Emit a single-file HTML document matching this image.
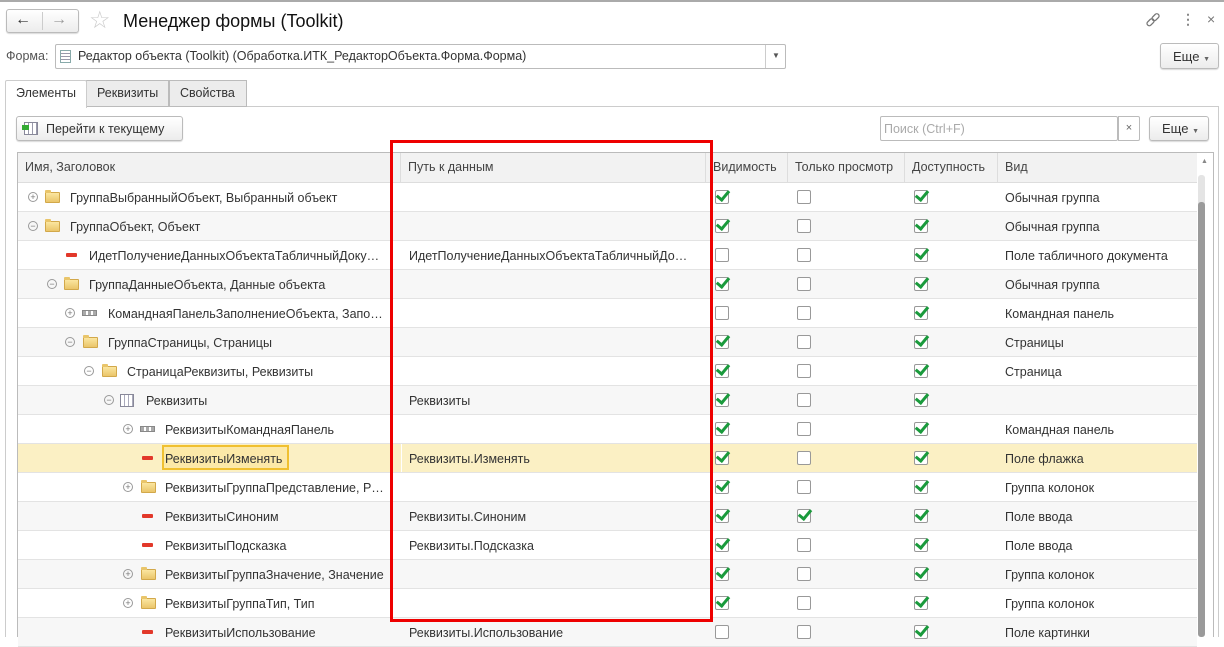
<!DOCTYPE html>
<html><head><meta charset="utf-8">
<style>
*{margin:0;padding:0;box-sizing:border-box}
body{width:1224px;height:637px;overflow:hidden;background:#fff;font-family:"Liberation Sans",sans-serif;font-size:12px;color:#333;position:relative}
.a{position:absolute}
.btn{position:absolute;border:1px solid #bbb;border-radius:3px;background:linear-gradient(#fff,#ececec);box-shadow:0 1px 1px rgba(0,0,0,.15)}
.r{position:absolute;left:18px;width:1179px;height:29px;border-bottom:1px solid #e3e3e3}
.g{background:#f7f7f7}
.sel{background:#fbf0c4}
.t{position:absolute;top:8px;white-space:nowrap;color:#333;font-size:12.5px}
.cb{position:absolute;top:7px;width:14px;height:14px;border:1px solid #999;border-radius:2px;background:#fff}
.cb.c::after{content:"";position:absolute;left:3px;top:-3px;width:5px;height:10px;border:solid #1a9a3c;border-width:0 3px 3px 0;transform:rotate(40deg)}
.ex{position:absolute;top:9px;width:10px;height:10px;border:1px solid #999;border-radius:50%;font-size:9px;line-height:8px;text-align:center;color:#777}
.fo{position:absolute;top:9px;width:15px;height:11px;background:linear-gradient(#fbe6a0,#eac56a);border:1px solid #d2a84a;border-radius:1px}
.fo::before{content:"";position:absolute;left:-1px;top:-3px;width:6px;height:3px;background:#e9c56a;border-radius:1px 1px 0 0}
.rb{position:absolute;top:12px;width:11px;height:4px;background:#e2382a;border-radius:1px}
.cp{position:absolute;top:11px;width:15px;height:6px;border:1px solid #888;background:repeating-linear-gradient(90deg,#aaa 0 3px,#fff 3px 5px)}
.h{position:absolute;top:153px;height:29px;line-height:28px;border-right:1px solid #ddd;padding-left:7px;color:#444;font-size:12.5px;background:#f2f2f2}
</style></head><body>
<div class="a" style="left:0;top:0;width:1224px;height:2px;background:#aaa"></div>
<div class="btn" style="left:6px;top:9px;width:73px;height:24px"></div>
<div class="a" style="left:42px;top:12px;width:1px;height:18px;background:#ccc"></div>
<div class="a" style="left:15px;top:11px;font-size:16px;color:#333">&#8592;</div>
<div class="a" style="left:51px;top:11px;font-size:16px;color:#999">&#8594;</div>
<div class="a" style="left:89px;top:6px;font-size:24px;color:#ccc">&#9734;</div>
<div class="a" style="left:123px;top:11px;font-size:18px;color:#111">Менеджер формы (Toolkit)</div>
<svg class="a" style="left:1145px;top:12px" width="16" height="16" viewBox="0 0 16 16"><g fill="none" stroke="#777" stroke-width="1.3"><rect x="1.5" y="8" width="8" height="4.5" rx="2.2" transform="rotate(-45 5.5 10.2)"/><rect x="6.5" y="3" width="8" height="4.5" rx="2.2" transform="rotate(-45 10.5 5.2)"/></g></svg>
<div class="a" style="left:1181px;top:11px;font-size:14px;color:#888;font-weight:bold">&#8942;</div>
<div class="a" style="left:1207px;top:11px;font-size:14px;color:#777">&#215;</div>
<div class="a" style="left:6px;top:49px;font-size:12.5px;color:#555">Форма:</div>
<div class="a" style="left:55px;top:44px;width:731px;height:25px;border:1px solid #bbb;border-radius:2px"></div>
<div class="a" style="left:60px;top:50px;width:11px;height:13px;border:1px solid #8aa;background:repeating-linear-gradient(#fff 0 2px,#99a 2px 3px)"></div>
<div class="a" style="left:78px;top:49px;font-size:12.5px;color:#333">Редактор объекта (Toolkit) (Обработка.ИТК_РедакторОбъекта.Форма.Форма)</div>
<div class="a" style="left:765px;top:45px;width:1px;height:23px;background:#ccc"></div>
<div class="a" style="left:772px;top:51px;font-size:8px;color:#555">&#9660;</div>
<div class="btn" style="left:1160px;top:43px;width:59px;height:26px"></div>
<div class="a" style="left:1173px;top:49px;font-size:13px;color:#333">Еще <span style="font-size:7px;color:#666">&#9660;</span></div>
<div class="a" style="left:5px;top:106px;width:1214px;height:531px;border:1px solid #ccc;border-bottom:none"></div>
<div class="a" style="left:86px;top:80px;width:83px;height:27px;border:1px solid #bbb;background:#ececec"></div>
<div class="a" style="left:169px;top:80px;width:78px;height:27px;border:1px solid #bbb;background:#ececec"></div>
<div class="a" style="left:5px;top:80px;width:82px;height:28px;border:1px solid #ccc;border-bottom:none;background:#fff;border-radius:2px 2px 0 0"></div>
<div class="a" style="left:16px;top:86px;font-size:12.5px;color:#333">Элементы</div>
<div class="a" style="left:97px;top:86px;font-size:12.5px;color:#333">Реквизиты</div>
<div class="a" style="left:180px;top:86px;font-size:12.5px;color:#333">Свойства</div>
<div class="btn" style="left:16px;top:116px;width:167px;height:25px"></div>
<div class="a" style="left:24px;top:122px;width:14px;height:13px;border:1px solid #889;background:repeating-linear-gradient(90deg,#fff 0 3px,#99a 3px 4px)"></div>
<div class="a" style="left:22px;top:125px;width:7px;height:5px;background:#3a3"></div>
<div class="a" style="left:46px;top:122px;font-size:12.5px;color:#333">Перейти к текущему</div>
<div class="a" style="left:880px;top:116px;width:238px;height:25px;border:1px solid #bbb;border-radius:2px"></div>
<div class="a" style="left:884px;top:122px;font-size:12.5px;color:#aaa">Поиск (Ctrl+F)</div>
<div class="a" style="left:1118px;top:116px;width:22px;height:25px;border:1px solid #bbb;border-radius:0 2px 2px 0;text-align:center;line-height:22px;color:#666;font-size:11px">&#215;</div>
<div class="btn" style="left:1149px;top:116px;width:60px;height:25px"></div>
<div class="a" style="left:1162px;top:121px;font-size:13px;color:#333">Еще <span style="font-size:7px;color:#666">&#9660;</span></div>
<div class="a" style="left:17px;top:152px;width:1197px;height:485px;border:1px solid #bbb;border-bottom:none"></div>
<div class="h" style="left:18px;width:375px">Имя, Заголовок</div>
<div class="h" style="left:393px;width:8px;padding:0"></div>
<div class="h" style="left:401px;width:305px">Путь к данным</div>
<div class="h" style="left:706px;width:82px">Видимость</div>
<div class="h" style="left:788px;width:117px">Только просмотр</div>
<div class="h" style="left:905px;width:93px">Доступность</div>
<div class="h" style="left:998px;width:199px;border-right:none">Вид</div>
<div class="a" style="left:18px;top:182px;width:1179px;height:1px;background:#ddd"></div>
<div class="a" style="left:1197px;top:153px;width:16px;height:484px;background:#fff"></div>
<div class="a" style="left:1201px;top:158px;font-size:7px;color:#888">&#9650;</div>
<div class="a" style="left:1198px;top:175px;width:7px;height:75px;background:#e4e4e4;border-radius:3px"></div>
<div class="a" style="left:1198px;top:202px;width:7px;height:435px;background:#9a9a9a;border-radius:3px"></div>

<div class="r" style="top:183px"><div class="ex" style="left:10px">+</div><div class="fo" style="left:27px"></div><div class="t" style="left:52px">ГруппаВыбранныйОбъект, Выбранный объект</div><div class="cb c" style="left:697px"></div><div class="cb" style="left:779px"></div><div class="cb c" style="left:896px"></div><div class="t" style="left:987px">Обычная группа</div></div>
<div class="r g" style="top:212px"><div class="ex" style="left:10px">−</div><div class="fo" style="left:27px"></div><div class="t" style="left:52px">ГруппаОбъект, Объект</div><div class="cb c" style="left:697px"></div><div class="cb" style="left:779px"></div><div class="cb c" style="left:896px"></div><div class="t" style="left:987px">Обычная группа</div></div>
<div class="r" style="top:241px"><div class="rb" style="left:48px"></div><div class="t" style="left:71px">ИдетПолучениеДанныхОбъектаТабличныйДоку…</div><div class="t" style="left:391px">ИдетПолучениеДанныхОбъектаТабличныйДо…</div><div class="cb" style="left:697px"></div><div class="cb" style="left:779px"></div><div class="cb c" style="left:896px"></div><div class="t" style="left:987px">Поле табличного документа</div></div>
<div class="r g" style="top:270px"><div class="ex" style="left:29px">−</div><div class="fo" style="left:46px"></div><div class="t" style="left:71px">ГруппаДанныеОбъекта, Данные объекта</div><div class="cb c" style="left:697px"></div><div class="cb" style="left:779px"></div><div class="cb c" style="left:896px"></div><div class="t" style="left:987px">Обычная группа</div></div>
<div class="r" style="top:299px"><div class="ex" style="left:47px">+</div><div class="cp" style="left:64px"></div><div class="t" style="left:90px">КоманднаяПанельЗаполнениеОбъекта, Запо…</div><div class="cb" style="left:697px"></div><div class="cb" style="left:779px"></div><div class="cb c" style="left:896px"></div><div class="t" style="left:987px">Командная панель</div></div>
<div class="r g" style="top:328px"><div class="ex" style="left:47px">−</div><div class="fo" style="left:65px"></div><div class="t" style="left:90px">ГруппаСтраницы, Страницы</div><div class="cb c" style="left:697px"></div><div class="cb" style="left:779px"></div><div class="cb c" style="left:896px"></div><div class="t" style="left:987px">Страницы</div></div>
<div class="r" style="top:357px"><div class="ex" style="left:66px">−</div><div class="fo" style="left:84px"></div><div class="t" style="left:109px">СтраницаРеквизиты, Реквизиты</div><div class="cb c" style="left:697px"></div><div class="cb" style="left:779px"></div><div class="cb c" style="left:896px"></div><div class="t" style="left:987px">Страница</div></div>
<div class="r g" style="top:386px"><div class="ex" style="left:86px">−</div><div class="a" style="left:102px;top:8px;width:14px;height:13px;border:1px solid #889;background:repeating-linear-gradient(90deg,#fff 0 3px,#aab 3px 4px)"></div><div class="t" style="left:128px">Реквизиты</div><div class="t" style="left:391px">Реквизиты</div><div class="cb c" style="left:697px"></div><div class="cb" style="left:779px"></div><div class="cb c" style="left:896px"></div></div>
<div class="r" style="top:415px"><div class="ex" style="left:105px">+</div><div class="cp" style="left:122px"></div><div class="t" style="left:147px">РеквизитыКоманднаяПанель</div><div class="cb c" style="left:697px"></div><div class="cb" style="left:779px"></div><div class="cb c" style="left:896px"></div><div class="t" style="left:987px">Командная панель</div></div>
<div class="r sel" style="top:444px"><div class="rb" style="left:124px"></div><div class="a" style="left:144px;top:1px;width:127px;height:25px;border:2px solid #f0c030;background:#fce9a8"></div><div class="t" style="left:147px">РеквизитыИзменять</div><div class="a" style="left:383px;top:0;width:1px;height:28px;background:#fff"></div><div class="t" style="left:391px">Реквизиты.Изменять</div><div class="cb c" style="left:697px"></div><div class="cb" style="left:779px"></div><div class="cb c" style="left:896px"></div><div class="t" style="left:987px">Поле флажка</div></div>
<div class="r" style="top:473px"><div class="ex" style="left:105px">+</div><div class="fo" style="left:123px"></div><div class="t" style="left:147px">РеквизитыГруппаПредставление, Р…</div><div class="cb c" style="left:697px"></div><div class="cb" style="left:779px"></div><div class="cb c" style="left:896px"></div><div class="t" style="left:987px">Группа колонок</div></div>
<div class="r g" style="top:502px"><div class="rb" style="left:124px"></div><div class="t" style="left:147px">РеквизитыСиноним</div><div class="t" style="left:391px">Реквизиты.Синоним</div><div class="cb c" style="left:697px"></div><div class="cb c" style="left:779px"></div><div class="cb c" style="left:896px"></div><div class="t" style="left:987px">Поле ввода</div></div>
<div class="r" style="top:531px"><div class="rb" style="left:124px"></div><div class="t" style="left:147px">РеквизитыПодсказка</div><div class="t" style="left:391px">Реквизиты.Подсказка</div><div class="cb c" style="left:697px"></div><div class="cb" style="left:779px"></div><div class="cb c" style="left:896px"></div><div class="t" style="left:987px">Поле ввода</div></div>
<div class="r g" style="top:560px"><div class="ex" style="left:105px">+</div><div class="fo" style="left:123px"></div><div class="t" style="left:147px">РеквизитыГруппаЗначение, Значение</div><div class="cb c" style="left:697px"></div><div class="cb" style="left:779px"></div><div class="cb c" style="left:896px"></div><div class="t" style="left:987px">Группа колонок</div></div>
<div class="r" style="top:589px"><div class="ex" style="left:105px">+</div><div class="fo" style="left:123px"></div><div class="t" style="left:147px">РеквизитыГруппаТип, Тип</div><div class="cb c" style="left:697px"></div><div class="cb" style="left:779px"></div><div class="cb c" style="left:896px"></div><div class="t" style="left:987px">Группа колонок</div></div>
<div class="r g" style="top:618px"><div class="rb" style="left:124px"></div><div class="t" style="left:147px">РеквизитыИспользование</div><div class="t" style="left:391px">Реквизиты.Использование</div><div class="cb" style="left:697px"></div><div class="cb" style="left:779px"></div><div class="cb c" style="left:896px"></div><div class="t" style="left:987px">Поле картинки</div></div>

<div class="a" style="left:390px;top:140px;width:323px;height:482px;border:3px solid #ee0000"></div>
</body></html>
